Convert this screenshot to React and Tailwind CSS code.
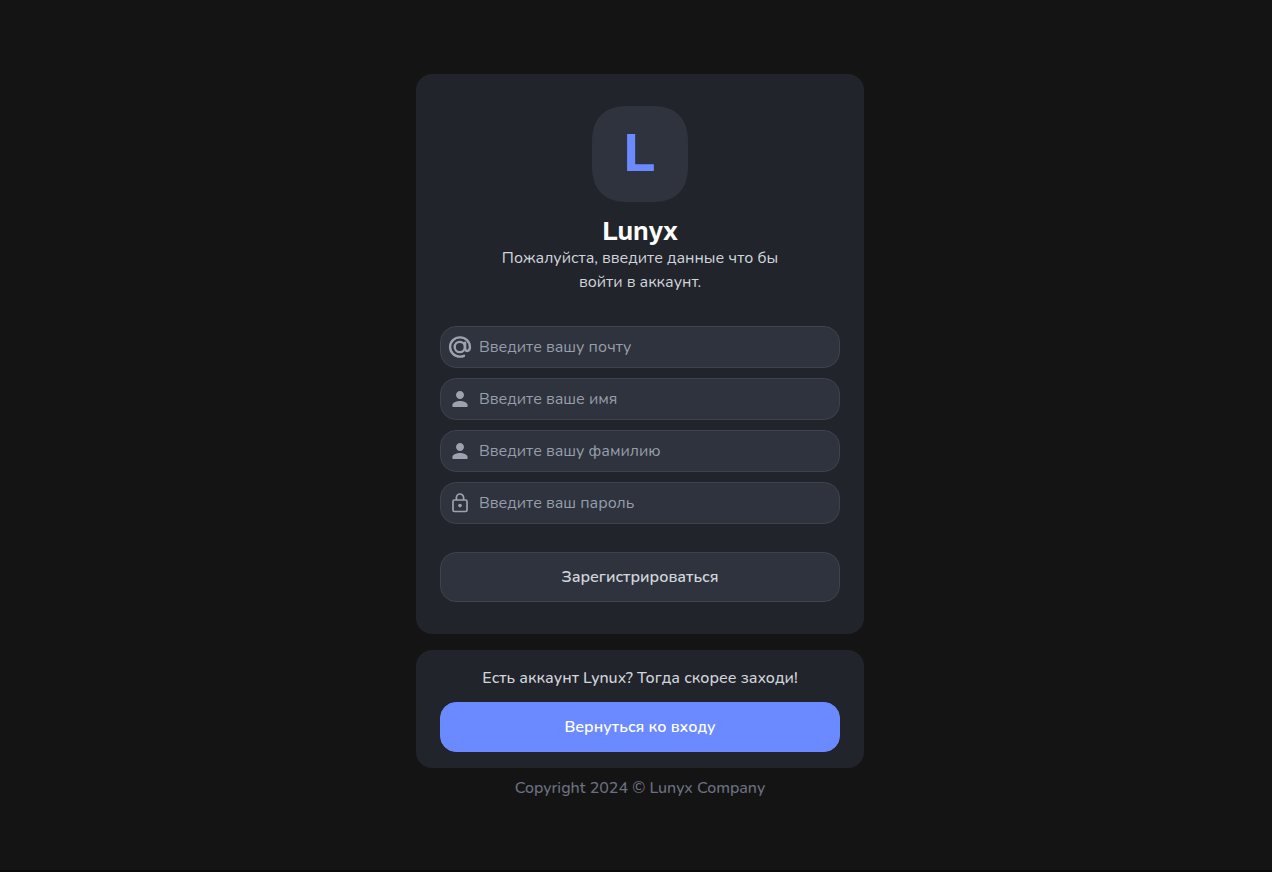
function AtIcon({ className }) {
  return (
    <svg viewBox="0 0 24 24" fill="none" stroke="currentColor" strokeWidth="2.4" strokeLinecap="round" strokeLinejoin="round" className={className} aria-hidden="true">
      <circle cx="11.8" cy="12" r="5.1" />
      <path d="M17.1 7.6V13.4C17.3 17.4 21.9 16.6 21.9 12A9.9 9.6 0 1 0 12 21.6Q14.2 21.6 16 20.8" />
    </svg>
  );
}

function PersonIcon({ className }) {
  return (
    <svg viewBox="0 0 24 24" fill="currentColor" className={className} aria-hidden="true">
      <path d="M12 12c2.21 0 4-1.79 4-4s-1.79-4-4-4-4 1.79-4 4 1.79 4 4 4zm0 2c-2.67 0-7.6 1.34-7.6 4v1c0 .55.45 1 1 1h13.2c.55 0 1-.45 1-1v-1c0-2.66-4.93-4-7.6-4z" />
    </svg>
  );
}

function LockIcon({ className }) {
  return (
    <svg viewBox="0 0 24 24" fill="none" stroke="currentColor" strokeWidth="1.7" className={className} aria-hidden="true">
      <rect x="5" y="9" width="14" height="11.5" rx="1.4" />
      <path d="M8.4 9V6.6a3.6 3.6 0 0 1 7.2 0V9" />
      <circle cx="12" cy="14.6" r="1.8" fill="currentColor" stroke="none" />
    </svg>
  );
}

function Logo() {
  return (
    <svg viewBox="0 0 96 96" className="size-24" role="img" aria-label="Lunyx">
      <path d="M36 0H60C84 0 96 12 96 36V60C96 84 84 96 60 96H36C12 96 0 84 0 60V36C0 12 12 0 36 0Z" fill="#2f333d" />
      <text x="47" y="65" textAnchor="middle" fill="#6b8aff" className="font-['Archivo','Inter',sans-serif] text-[54px] font-bold">L</text>
    </svg>
  );
}

const fields = [
  { id: 'email', type: 'email', placeholder: 'Введите вашу почту', Icon: AtIcon },
  { id: 'first-name', type: 'text', placeholder: 'Введите ваше имя', Icon: PersonIcon },
  { id: 'last-name', type: 'text', placeholder: 'Введите вашу фамилию', Icon: PersonIcon },
  { id: 'password', type: 'password', placeholder: 'Введите ваш пароль', Icon: LockIcon },
];

function Field({ id, type, placeholder, Icon }) {
  return (
    <label htmlFor={id} className="flex items-center gap-[7px] rounded-2xl border border-[#3f424d] bg-[#2f333d] py-2 pr-3 pl-[7px] text-[#9da2b0]">
      <Icon className="size-6 shrink-0" />
      <input id={id} type={type} placeholder={placeholder} aria-label={placeholder} className="h-6 min-w-0 flex-1 bg-transparent outline-none placeholder:text-[#969eab]" />
    </label>
  );
}

export default function App() {
  return (
    <main className="flex min-h-screen flex-col items-center justify-center border-b-2 border-[#0c0709] bg-[#141414] pt-1 pl-2 font-['Nunito','Noto_Sans',sans-serif] text-base text-[#d1d5db]">
      <div className="flex w-full max-w-md flex-col">
        <section className="rounded-2xl bg-[#21242b] px-6 py-8">
          <header className="flex flex-col items-center text-center">
            <Logo />
            <h1 className="mt-4 mb-0.5 font-['Archivo','Inter',sans-serif] text-[26px] leading-[26px] font-bold text-white">Lunyx</h1>
            <p className="w-72">Пожалуйста, введите данные что бы войти в аккаунт.</p>
          </header>
          <form className="mt-8 flex flex-col gap-2.5" onSubmit={(e) => e.preventDefault()}>
            {fields.map((field) => (
              <Field key={field.id} {...field} />
            ))}
            <button type="submit" className="mt-[18px] rounded-2xl border border-[#3f424d] bg-[#2f333d] py-3 font-semibold">
              Зарегистрироваться
            </button>
          </form>
        </section>
        <section className="mt-4 flex flex-col gap-3 rounded-2xl bg-[#21242b] px-6 py-4 text-center">
          <p className="font-medium">Есть аккаунт Lynux? Тогда скорее заходи!</p>
          <button type="button" className="rounded-2xl border border-[#6b8aff] bg-[#6b8aff] py-3 font-semibold text-white">
            Вернуться ко входу
          </button>
        </section>
        <footer className="mt-2 text-center font-medium text-[#6b7080]">Copyright 2024 © Lunyx Company</footer>
      </div>
    </main>
  );
}
